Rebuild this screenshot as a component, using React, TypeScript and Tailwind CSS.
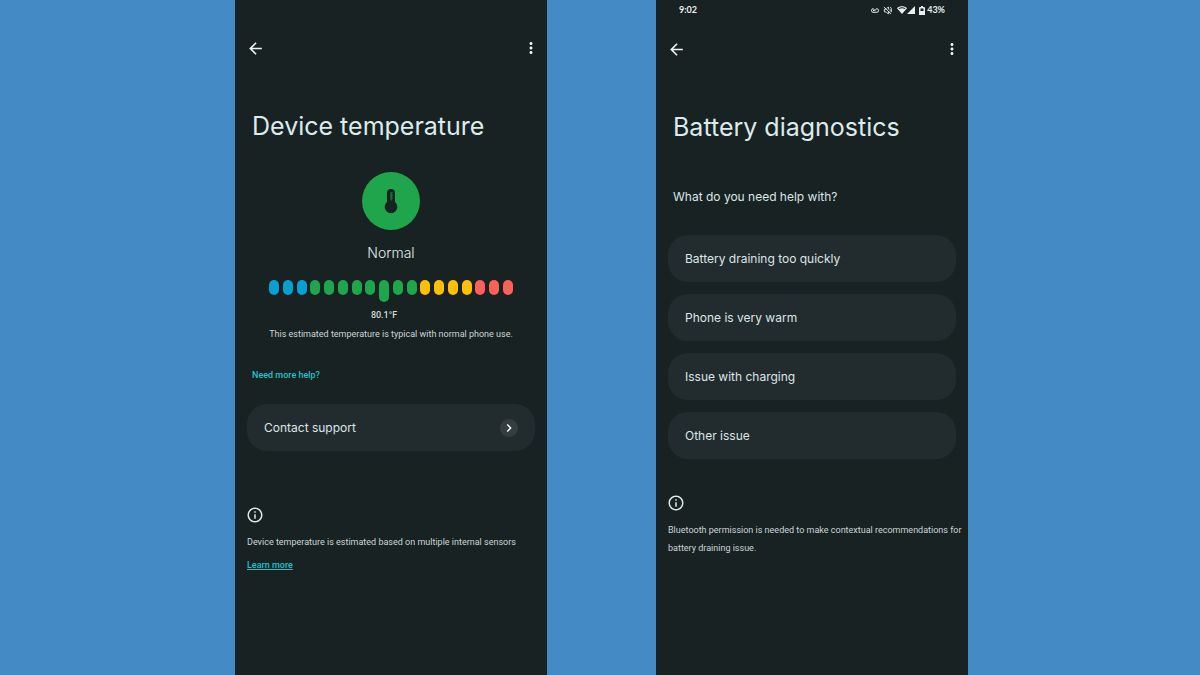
import React from "react";
import {
  MdArrowBack,
  MdChevronRight,
  MdInfoOutline,
  MdMoreVert,
} from "react-icons/md";

const levels = [
  ...Array<string>(3).fill("bg-[#0a9fd4]"),
  ...Array<string>(8).fill("bg-[#1fa64c]"),
  ...Array<string>(4).fill("bg-[#fdbf07]"),
  ...Array<string>(3).fill("bg-[#fb6159]"),
];
const currentLevel = 8;

const issues = [
  "Battery draining too quickly",
  "Phone is very warm",
  "Issue with charging",
  "Other issue",
];

function Toolbar() {
  return (
    <header className="-mx-px flex h-5 items-center justify-between text-[#eef4f4]">
      <button type="button" aria-label="Back">
        <MdArrowBack className="size-[19px]" />
      </button>
      <button type="button" aria-label="More options" className="-mr-1">
        <MdMoreVert className="size-[18px]" />
      </button>
    </header>
  );
}

function Title({ children }: { children: React.ReactNode }) {
  return (
    <h1 className="mt-[50px] pl-[5px] text-[25px] leading-[36px] whitespace-nowrap text-[#dcebeb]">
      {children}
    </h1>
  );
}

function Thermometer() {
  return (
    <svg viewBox="0 0 14 25" className="h-[25px] w-[14px]" aria-hidden="true">
      <path d="M3 4a4 4 0 0 1 8 0v9a6.300 6.300 0 1 1-8 0Z" fill="#17231f" />
      <path d="M7 3.500v8M7 4h1.800M7 6.500h1.800M7 9h1.800" stroke="#1b8f45" strokeWidth="1" fill="none" />
    </svg>
  );
}

function StatusBar() {
  return (
    <div className="flex h-5 items-center justify-between px-[11px] font-[Lato,sans-serif] text-[9px] leading-5 font-bold text-[#e9eeee]">
      <span>9:02</span>
      <span className="flex items-center">
        <svg viewBox="0 0 16 10" className="h-[5px] w-2" fill="none" stroke="currentColor" strokeWidth="2" aria-hidden="true">
          <path d="M8 5C6.500 2.500 5.500 1.500 4 1.500a3 3.500 0 0 0 0 7h8a3 3.500 0 0 0 0-7C10 1.500 9 3 8 5Z M4 5h3" />
        </svg>
        <svg viewBox="0 0 20 20" className="ml-1 size-[9px]" fill="none" stroke="currentColor" strokeWidth="2" aria-hidden="true">
          <path d="M2 2l16 16M7 7H3v6h4l5 5v-5M8.500 5.500 12 2v6M15 6.500c1.500 2 1.500 4 .5 6M16 2c3.500 3.500 4 8 2 12" />
        </svg>
        <svg viewBox="0 0 20 16" className="ml-[5px] h-2 w-[10px]" fill="currentColor" aria-hidden="true">
          <path fillRule="evenodd" d="M10 16 0 4.500C5-.8 15-.8 20 4.500ZM3 4.700l1.300 1.500c3.400-2.600 8-2.600 11.400 0L17 4.700C13 1.500 7 1.500 3 4.700Z" />
        </svg>
        <svg viewBox="0 0 16 16" className="size-2" fill="currentColor" aria-hidden="true">
          <path d="M16 0v16H0Z" />
        </svg>
        <svg viewBox="0 0 12 18" className="ml-1 h-[9px] w-[6px]" fill="currentColor" aria-hidden="true">
          <path fillRule="evenodd" d="M4 0h4v2h2.500L12 3.500V18H0V3.500L1.500 2H4ZM3 5v5h6V5Z" />
        </svg>
        <span className="ml-[2px]">43%</span>
      </span>
    </div>
  );
}

function TemperatureScreen() {
  return (
    <section className="flex flex-col bg-[#182223] px-3 pt-[38px]">
      <Toolbar />
      <Title>Device temperature</Title>
      <div className="mx-auto mt-7 flex size-[58px] items-center justify-center rounded-full bg-[#1fa64c]">
        <Thermometer />
      </div>
      <h2 className="mt-[13px] text-center text-sm leading-5 font-light text-[#e6eded]">Normal</h2>
      <div className="mx-[22px] mt-[17px] flex h-[22px] items-start justify-between">
        {levels.map((color, i) =>
          i === currentLevel ? (
            <div key={i} className={`relative h-[22px] w-[10px] rounded-full ${color}`}>
              <span className="absolute top-7 left-1/2 -translate-x-1/2 font-[Roboto,sans-serif] text-[9px] leading-[14px] font-medium text-[#d3dadb]">
                80.1°F
              </span>
            </div>
          ) : (
            <div key={i} className={`h-[15px] w-[10px] rounded-full ${color}`} />
          ),
        )}
      </div>
      <p className="mt-[25px] text-center font-[Roboto,sans-serif] text-[9px] leading-[14px] text-[#ccd5d6]">
        This estimated temperature is typical with normal phone use.
      </p>
      <a href="#help" className="mt-[27px] self-start pl-[5px] font-[Roboto,sans-serif] text-[9px] leading-[14px] font-medium text-[#1fc4c9]">
        Need more help?
      </a>
      <button type="button" className="mt-[22px] flex h-[47px] items-center justify-between rounded-[20px] bg-[#222c2e] px-[17px] text-left text-[12px] text-[#dde5e6]">
        Contact support
        <span className="flex size-[18px] items-center justify-center rounded-full bg-[#343e40] text-white">
          <MdChevronRight className="size-4" />
        </span>
      </button>
      <MdInfoOutline className="-ml-px mt-[55px] size-[18px] text-[#dfe9e9]" />
      <p className="mt-[11px] font-[Roboto,sans-serif] text-[9px] leading-[14px] text-[#ccd5d6]">
        Device temperature is estimated based on multiple internal sensors
      </p>
      <a href="#learn" className="mt-[9px] self-start font-[Roboto,sans-serif] text-[9px] leading-[14px] font-medium text-[#1fc4c9] underline">
        Learn more
      </a>
    </section>
  );
}

function DiagnosticsScreen() {
  return (
    <section className="flex flex-col bg-[#182223] px-3">
      <StatusBar />
      <div className="mt-[19px]">
        <Toolbar />
      </div>
      <Title>Battery diagnostics</Title>
      <p className="mt-[42px] pl-[5px] text-[12px] leading-5 text-[#dde5e6]">What do you need help with?</p>
      <div className="mt-7 flex flex-col gap-3">
        {issues.map((issue) => (
          <button key={issue} type="button" className="h-[47px] rounded-[20px] bg-[#222c2e] px-[17px] text-left text-[12px] text-[#dde5e6]">
            {issue}
          </button>
        ))}
      </div>
      <MdInfoOutline className="-ml-px mt-[35px] size-[18px] text-[#dfe9e9]" />
      <p className="-mr-2 mt-[9px] font-[Roboto,sans-serif] text-[9px] leading-[18px] text-[#ccd5d6]">
        Bluetooth permission is needed to make contextual recommendations for battery draining issue.
      </p>
    </section>
  );
}

export default function App() {
  return (
    <main className="grid min-h-screen grid-cols-2 gap-[109px] bg-[#448ac5] pr-[232px] pl-[235px] font-[Inter,sans-serif]">
      <TemperatureScreen />
      <DiagnosticsScreen />
    </main>
  );
}
